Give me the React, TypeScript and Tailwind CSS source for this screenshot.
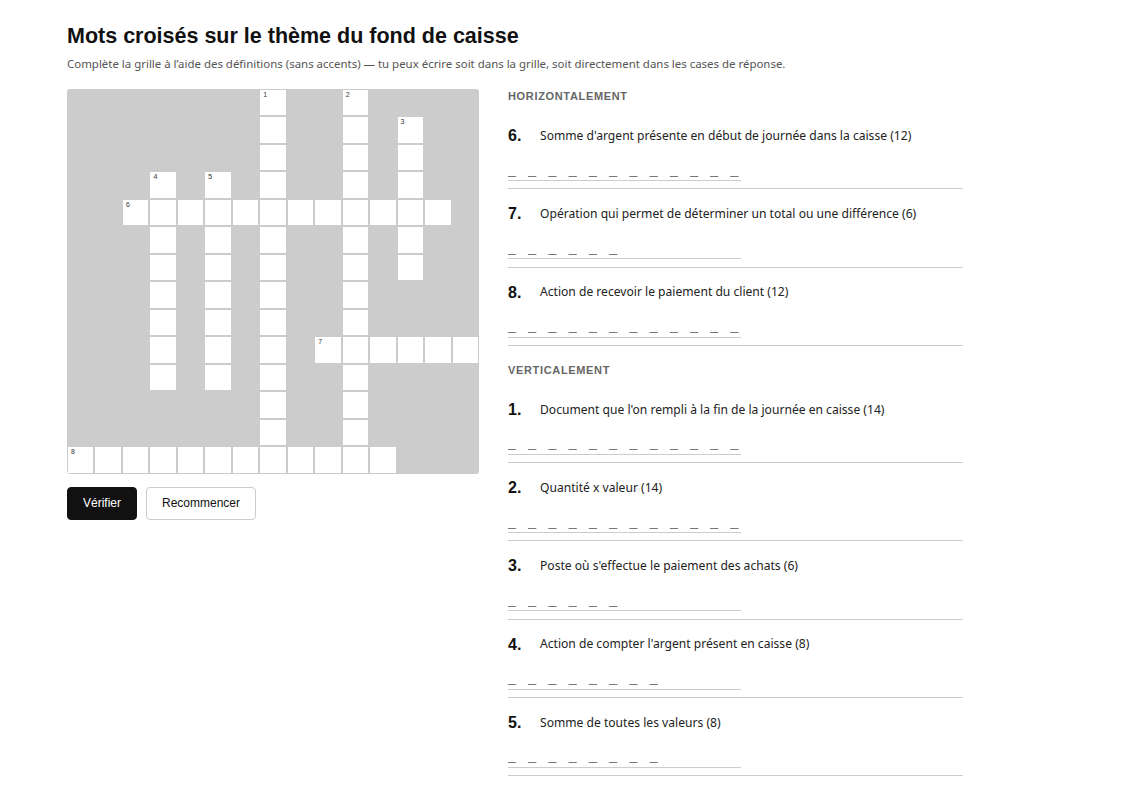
import React from "react";

const ROWS = 14;
const COLS = 15;

type Word = { n: number; r: number; c: number; len: number; dir: "a" | "d" };

const words: Word[] = [
  { n: 1, r: 0, c: 7, len: 14, dir: "d" },
  { n: 2, r: 0, c: 10, len: 14, dir: "d" },
  { n: 3, r: 1, c: 12, len: 6, dir: "d" },
  { n: 4, r: 3, c: 3, len: 8, dir: "d" },
  { n: 5, r: 3, c: 5, len: 8, dir: "d" },
  { n: 6, r: 4, c: 2, len: 12, dir: "a" },
  { n: 7, r: 9, c: 9, len: 6, dir: "a" },
  { n: 8, r: 13, c: 0, len: 12, dir: "a" },
];

function buildGrid() {
  const open: boolean[][] = Array.from({ length: ROWS }, () => Array(COLS).fill(false));
  const nums: (number | null)[][] = Array.from({ length: ROWS }, () => Array(COLS).fill(null));
  for (const w of words) {
    nums[w.r][w.c] = w.n;
    for (let i = 0; i < w.len; i++) {
      const r = w.dir === "d" ? w.r + i : w.r;
      const c = w.dir === "a" ? w.c + i : w.c;
      open[r][c] = true;
    }
  }
  return { open, nums };
}

const across = [
  { n: 6, text: "Somme d'argent présente en début de journée dans la caisse", len: 12 },
  { n: 7, text: "Opération qui permet de déterminer un total ou une différence", len: 6 },
  { n: 8, text: "Action de recevoir le paiement du client", len: 12 },
];

const down = [
  { n: 1, text: "Document que l'on rempli à la fin de la journée en caisse", len: 14 },
  { n: 2, text: "Quantité x valeur", len: 14 },
  { n: 3, text: "Poste où s'effectue le paiement des achats", len: 6 },
  { n: 4, text: "Action de compter l'argent présent en caisse", len: 8 },
  { n: 5, text: "Somme de toutes les valeurs", len: 8 },
];

function Clue({ n, text, len }: { n: number; text: string; len: number }) {
  return (
    <li className="border-b border-[#cccccc] pt-[14px] pb-[7.25px]">
      <div className="flex items-center h-[22px]">
        <span className="w-[32px] shrink-0 text-[16px] font-bold text-[#111] font-['Liberation_Sans',Arial,sans-serif]">
          {n}.
        </span>
        <span className="text-[12.1px] text-[#222] font-['Noto_Sans',sans-serif]">
          {text} ({len})
        </span>
      </div>
      <input
        type="text"
        placeholder={"_".repeat(len)}
        className="mt-[10px] block w-[233px] h-[24px] p-0 border-0 border-b border-[#cccccc] bg-transparent outline-none text-[14px] tracking-[12.45px] font-['Liberation_Sans',Arial,sans-serif] text-[#222] placeholder:text-[#777]"
      />
    </li>
  );
}

export default function App() {
  const { open, nums } = buildGrid();
  return (
    <div className="min-h-screen bg-white pl-[67px] pt-[23px] font-['Liberation_Sans',Arial,sans-serif]">
      <h1 className="text-[21.5px] leading-[26px] font-bold text-[#111]">
        Mots croisés sur le thème du fond de caisse
      </h1>
      <p className="mt-[7px] text-[11.45px] leading-[16px] text-[#555] font-['Noto_Sans',sans-serif]">
        Complète la grille à l’aide des définitions (sans accents) — tu peux écrire soit dans la grille, soit directement dans les cases de réponse.
      </p>

      <div className="mt-[17px] flex items-start gap-[29px]">
        <div className="w-[412px] shrink-0">
          <div className="grid grid-cols-[repeat(15,minmax(0,1fr))] gap-[2px] p-px bg-[#cccccc] rounded-[3px]">
            {open.map((row, r) =>
              row.map((isOpen, c) => (
                <div
                  key={`${r}-${c}`}
                  className={`relative aspect-square ${isOpen ? "bg-white" : "bg-[#cccccc]"}`}
                >
                  {nums[r][c] !== null && (
                    <span className="absolute left-[3px] top-[1px] text-[7px] leading-[8px] text-[#333]">
                      {nums[r][c]}
                    </span>
                  )}
                </div>
              ))
            )}
          </div>
          <div className="mt-[13px] flex gap-[9px]">
            <button className="h-[33px] px-[15px] rounded-[4px] bg-[#111] border border-[#111] text-white text-[12px]">
              Vérifier
            </button>
            <button className="h-[33px] px-[15px] rounded-[4px] bg-white border border-[#cccccc] text-[#111] text-[12px]">
              Recommencer
            </button>
          </div>
        </div>

        <div className="w-[455px]">
          <h2 className="text-[11px] leading-[14px] font-bold tracking-[0.06em] text-[#666] mb-[8px]">
            HORIZONTALEMENT
          </h2>
          <ul>
            {across.map((c) => (
              <Clue key={c.n} {...c} />
            ))}
          </ul>
          <h2 className="mt-[17px] text-[11px] leading-[14px] font-bold tracking-[0.06em] text-[#666] mb-[8px]">
            VERTICALEMENT
          </h2>
          <ul>
            {down.map((c) => (
              <Clue key={c.n} {...c} />
            ))}
          </ul>
        </div>
      </div>
    </div>
  );
}
